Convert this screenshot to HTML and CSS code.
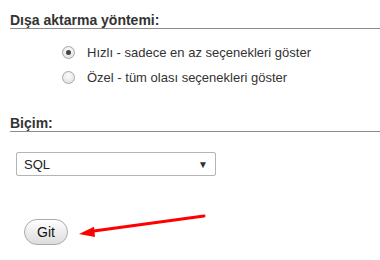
FILE: index.html
```html
<!DOCTYPE html>
<html lang="tr">
<head>
  <meta charset="UTF-8">
  <title>Dışa aktar</title>
  <link rel="stylesheet" href="styles.css">
</head>
<body>
  <h2 class="section-title first">Dışa aktarma yöntemi:</h2>

  <div class="options">
    <label class="option">
      <input type="radio" name="method" checked>
      <span>Hızlı - sadece en az seçenekleri göster</span>
    </label>
    <label class="option">
      <input type="radio" name="method">
      <span>Özel - tüm olası seçenekleri göster</span>
    </label>
  </div>

  <h2 class="section-title">Biçim:</h2>

  <div class="format">
    <div class="select">
      <span>SQL</span>
      <span class="caret">▼</span>
    </div>
  </div>

  <div class="actions">
    <button class="go">Git</button>
  </div>

  <svg class="pointer" width="380" height="260" viewBox="0 0 380 260">
    <line x1="204" y1="216" x2="90" y2="231.5" stroke="#f00" stroke-width="3" stroke-linecap="round"/>
    <polygon points="79,234 94,226.8 95,237" fill="#f00"/>
  </svg>
</body>
</html>
```

FILE: styles.css
```css
body {
  margin: 0;
  padding-left: 10px;
  font-family: "Liberation Sans", Arial, sans-serif;
  color: #222;
  position: relative;
  width: 370px;
  height: 260px;
  overflow: hidden;
}
.section-title {
  margin: 25px 0 0;
  font-size: 14px;
  line-height: 16px;
  font-weight: bold;
  color: #333;
  border-bottom: 1px solid #8c8c8c;
}
.section-title.first {
  margin-top: 12px;
}
.options {
  margin-top: 11px;
  padding-left: 52px;
}
.option {
  display: flex;
  align-items: center;
  height: 25px;
  font-size: 13px;
  color: #333;
}
.option input {
  appearance: none;
  -webkit-appearance: none;
  box-sizing: border-box;
  margin: 0 12px 0 0;
  width: 13px;
  height: 13px;
  border: 1px solid #a6a6a6;
  border-radius: 50%;
  background: radial-gradient(circle at 50% 35%, #fbfbfb, #dedede);
  display: grid;
  place-items: center;
}
.option input:checked::before {
  content: "";
  width: 5px;
  height: 5px;
  border-radius: 50%;
  background: #444;
}
.format {
  margin-top: 20px;
  padding-left: 6px;
}
.select {
  box-sizing: border-box;
  width: 200px;
  height: 24px;
  border: 1px solid #b4b4b4;
  border-radius: 2px;
  display: flex;
  align-items: center;
  justify-content: space-between;
  padding: 0 7px 0 7px;
  font-size: 13px;
  color: #222;
}
.caret {
  font-size: 10px;
  color: #333;
}
.actions {
  margin-top: 43px;
  padding-left: 14px;
}
.go {
  box-sizing: border-box;
  width: 44px;
  height: 26px;
  border: 1px solid #aaa;
  border-radius: 13px;
  background: linear-gradient(#fff, #dcdcdc);
  font-family: "Liberation Sans", Arial, sans-serif;
  font-size: 14px;
  color: #111;
  padding: 0;
}
.pointer {
  position: absolute;
  left: 0;
  top: 0;
  pointer-events: none;
}
```
